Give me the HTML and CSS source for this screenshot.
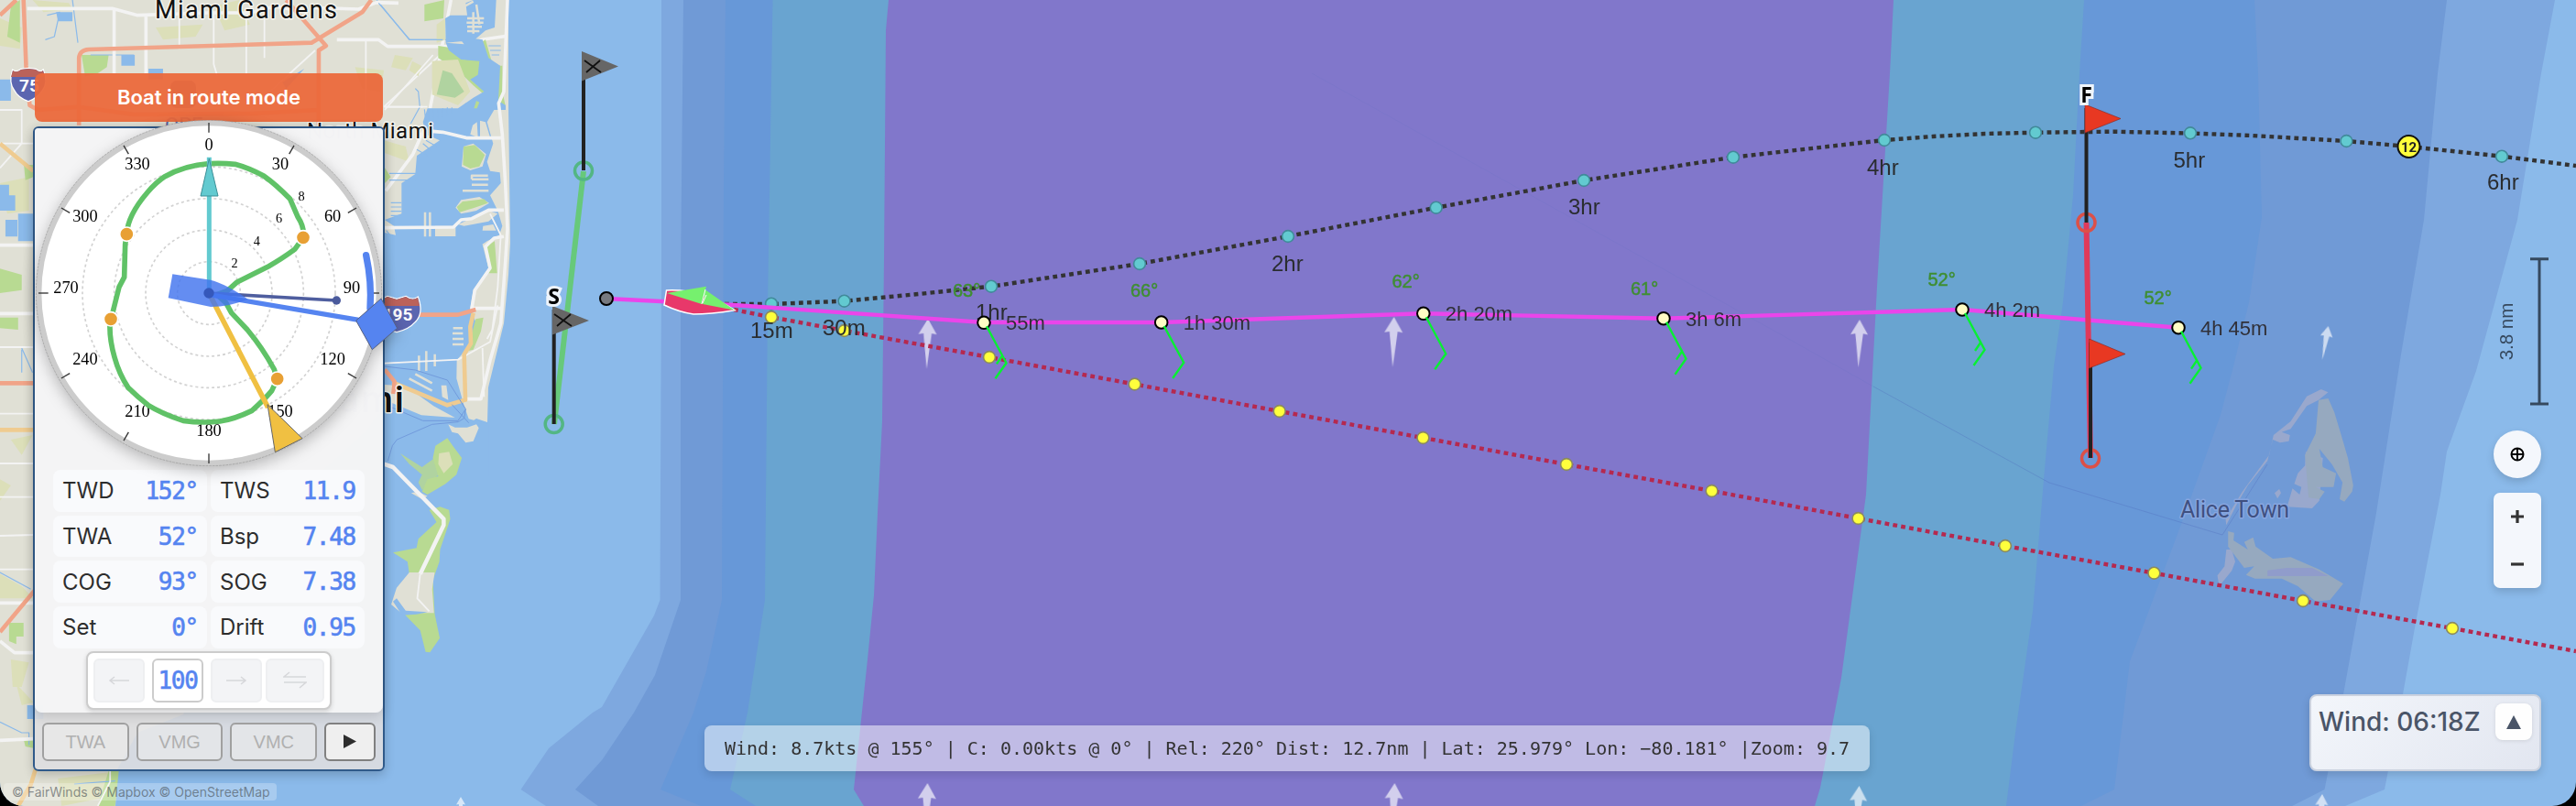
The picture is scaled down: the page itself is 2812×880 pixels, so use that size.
FILE: index.html
```html
<!DOCTYPE html>
<html lang="en">

<head>
    <meta charset="UTF-8">
    <meta name="viewport" content="width=device-width, initial-scale=1.0">
    <title>FairWinds</title>
    <link rel="stylesheet" href="styles.css">
</head>

<body>

    <div class="map">
        <svg class="map-canvas" width="2812" height="880" viewBox="0 0 2812 880">
            <!-- depth bands -->
            <path fill="#7ea8df" d="M722 0V300L720.500 655L714 672L657 772L647 778L599 817L568.500 862L596 880H2560L2603 862L2623 758L2637 680L2664 540L2671 493L2703 405L2748 240L2774 80L2789 0Z" />
            <path fill="#709ad6" d="M746 0L743 300V655L715 737L692 778L657 830L628 862L653 880H2502L2537.500 862L2558 758L2594 560L2621 387L2646 240L2661 80L2671 0Z" />
            <path fill="#6798d8" d="M792 0L790 200L788 655L771 733L757 778L721 862L765 880H2272L2308 862L2325 722L2383 567L2424 453L2438 400L2455 330L2469 237L2465 80L2461 0Z" />
            <path fill="#69a4d0" d="M843.500 0L838 333L835 655L816 778L797 862L825 880H2190L2200 800L2219 667L2231 523L2242 400L2252 330L2263 213L2270 80L2275 0Z" />
            <path fill="#8177cb" d="M970 0L967 33L965 283L963 460L958 560L954 650L947 720L932 862L943 880H1981L1987 860L2010 740L2037 540L2049 313L2054 230L2063 80L2067 0Z" />
            <path class="ferry faint" d="M1432 80L1940 363L2045 422" opacity=".3" />
            <path class="ferry faint" d="M2045 422L2237 527L2426 584L2475 507" />

            <!-- mainland -->
            <path class="land" d="M0 0H555V115L557 265L555 300L550 353L533 423L532 461L520 457L500 470L420 440L400 470L300 560L200 780L150 800L128 840L126 880H0Z" />
            <g transform="scale(.39541 .33333)">
                <path class="veg-light" d="M90 0L190 10L200 30L120 40ZM590 20L660 0L690 80L620 100ZM0 60L60 90L55 160L0 150ZM430 90L560 80L540 120L450 130ZM980 220L1060 230L1050 300L1000 290ZM1090 180L1140 190L1120 230L1080 220ZM1060 460L1120 480L1130 530L1060 500ZM0 600L80 580L80 690L20 700Z" />
                <path class="veg-mid" d="M30 20L55 0L55 140L20 120ZM225 180L300 180L295 220L270 240L235 250ZM0 880L60 900V950L0 960ZM0 1040L50 1040V1080L0 1075ZM66 540H92V580L70 590Z" />
                <path class="canal" d="M1040 0L1130 130H1250M200 0L215 140M250 180H370M130 50L165 40L150 120L125 130M60 1140L90 1220M60 1145V1220" />
                <path class="water" d="M155 40H200V70H160ZM335 180H372V215H335ZM410 225H450V260H410ZM0 260H30V330H0ZM50 700H92V790H50ZM15 720H48V775H15ZM0 605H25V640H42V690H0ZM780 270L840 225L790 290Z" />
                <path class="road-minor" d="M0 470H400M495 40V160M590 40V210L600 250M680 50V240M730 40V190M1010 130V400M1060 350H1180M0 550L60 470V360H0M0 1137H92M870 165L690 360M1215 180L1060 350" />
                <path class="road" d="M75 28H310L380 50L575 42H690L760 20L800 30L850 25M315 30V240M403 48V240M855 25L990 30L1040 8L1100 10M0 803H92M0 1027H92" />
                <path class="road" d="M1245 0L1180 400L1140 505L1065 625M930 130H1045L1070 152H1285L1330 130L1400 118" />
                <path class="motorway" d="M0 50L45 0M65 0L72 215L82 345L105 360L218 350L370 375L700 372L880 360M218 410V190Q220 164 245 162L860 140L1000 40L1025 0M790 0L900 150L880 165V410" />
                <path class="trunk" d="M0 470L92 560" />
                <path class="motorway" d="M0 1255H92" />
            </g>
            <g transform="translate(0 440) scale(.39541 .33333)">
                <path class="veg-light" d="M0 250L30 270L0 320ZM0 560L60 600L92 640L0 640ZM30 120L90 105L60 170ZM45 920L92 980L60 990ZM30 840L80 850L60 930L35 930ZM160 1230L300 1210V1290L170 1320Z" />
                <path class="veg-mid" d="M25 720H65V765H45V790L25 780ZM65 1100H92V1130L70 1125ZM300 1205H328L318 1320H270Z" />
                <path class="water" d="M75 990H120V1035H75Z" />
                <path class="canal" d="M0 555L85 610M0 1045L60 1080H80V1120M205 1248L318 1238" />
                <path class="road-minor" d="M0 35H92M0 198H92M0 308H92M0 435L92 432M0 545H92M304 1200V1240L270 1320" />
                <path class="road" d="M0 655H92M0 780L40 818H92M0 1105L92 1100" />
                <path class="trunk" d="M0 88H92M98 1200L85 1250L50 1320" />
                <path class="motorway" d="M0 750L95 615" />
            </g>

            <!-- Biscayne Bay and the beaches, east of the panel -->
            <g transform="translate(400 0) scale(.33333)">
                <path class="veg-mid" d="M190 15L255 0L252 60L190 70ZM235 150L300 160L360 150L390 130L410 200L400 290L380 305L350 280L300 230L235 190ZM432 215H445V300L455 345H432ZM60 550L80 580L60 600Z" />
                <path class="veg-light" d="M215 200L300 195L340 300L300 345L215 310ZM150 200L180 215L170 250L140 230ZM60 470L130 480L120 520ZM230 80L258 60L260 130L230 140Z" />
                <path class="veg-dark" d="M250 230L280 240L320 300L290 320L230 310Z" />
                <path class="water" d="M258 60L275 50L330 50L325 10L350 0H425L420 90L390 100L355 130L315 135L260 140ZM260 140L320 145L300 120L380 130L400 190L438 215L432 330L456 345V360H418L395 400L415 470L395 530L405 560L437 565L440 600L405 640L430 690L445 740L435 770L395 790L380 800L405 870L350 950L340 1010L360 1060L330 1140L296 1180L295 1240L320 1330L335 1372L400 1390V1560H60V762L96 770L90 740L60 720L115 700V600L160 570L165 510L240 460L195 440L185 400L200 355H300L350 320L385 300L340 260L365 245L370 200L310 195L270 165Z" />
                <path class="canal" d="M40 10L142 130H250M75 568H185M75 590H160M80 664H115M80 678H115M80 692H115M80 706H115M65 755L90 785M145 405L175 350L170 300L160 290M190 358L195 400M205 358V398M220 358V395M235 358V390M250 355V385M265 352V380M280 352V370M190 375H270M190 390H250M165 490L200 510M185 470L215 495M195 460L230 480M400 150H440M405 165H440M410 180H435" />
                <path class="land-line" d="M330 60H385M328 74H383M330 88H378M330 102H370M350 40V110M322 20L350 5M360 15L370 80M315 625H400M345 605H398M345 587H400M345 587V575H398M192 695V775M208 695V775M190 745H210M284 1075H315M282 1092H316M282 1110H318M282 1128H318M172 1165V1215M196 1150V1215M224 1160V1200M140 1240L215 1280M160 1225L215 1255" />
                <path class="land" d="M318 480L350 470L392 505L380 545L340 558L312 545ZM340 440L348 410L362 400L365 450ZM372 395L390 400L405 450H372ZM292 680L310 655L370 645L402 665L360 690L310 700ZM225 740H292V774H225ZM300 735L400 690L430 700L400 725L320 740ZM380 800L420 780L440 790L425 940L395 930L355 950L400 880ZM382 740L415 735L425 755H380ZM345 1010L395 940L425 950L410 1010L370 1040ZM60 1260L130 1265L220 1330L290 1368L180 1360L60 1310ZM245 1262H262L268 1310L248 1300ZM268 1390L290 1400H330L360 1390L368 1402L350 1445L325 1450L300 1420L280 1415Z" />
                <path class="veg-mid" d="M318 480L355 475L388 508L370 545L340 552L316 540ZM296 678L315 660L385 652L398 665L350 682L305 695ZM395 805L420 790L428 895H400ZM358 1045L383 1040L375 1085L350 1145L330 1150ZM360 330L370 335L362 355L352 355Z" />
                <path class="road-minor" d="M60 1190L300 1178L405 1120L430 1000M60 350H185M218 180L60 360M405 700L440 770L430 940L412 1080L395 1110M380 1140L385 1300" />
                <path class="road" d="M462 0L450 300L433 338L445 440L455 600L462 750L455 860L440 1060L405 1180L375 1307H330M215 430L250 433L330 452H440M60 746L285 744L310 720L345 716L400 688H450M450 775L418 780L390 808L405 878L355 950L345 1010H440" />
                <path class="trunk" d="M350 1025L340 1070L342 1125L320 1160L324 1310L265 1327L85 1252" />
                <path class="motorway" d="M150 1031H300L358 1014M60 1210L92 1250L88 1290" />
                <path class="ferry" d="M60 1200L160 1212L265 1245L325 1340L320 1370L300 1382L215 1390L100 1440L85 1460L70 1510M60 1325L185 1378H300L325 1340M280 1325L335 1385" />
            </g>

            <!-- Virginia Key, Key Biscayne -->
            <g transform="translate(0 440) scale(.39541 .33333)">
                <path class="veg-dark" d="M1105 165L1165 210L1200 180L1215 230L1165 285L1155 260L1165 235L1130 200Z" />
                <path class="veg-mid" d="M1195 180L1202 140L1235 115L1250 140L1275 180L1260 235L1230 265L1180 300L1165 290L1180 250L1210 240ZM1215 340L1240 350L1243 380L1215 480L1213 520L1195 580L1200 690L1214 770L1187 817L1175 815L1160 745L1115 690L1130 560L1125 520L1085 490L1150 475L1155 445L1205 390L1185 350Z" />
                <path class="veg-light" d="M1212 165L1240 160L1250 200L1225 230L1210 200Z" />
                <path class="land" d="M1130 555H1200L1193 610L1198 688H1150L1110 690L1080 660L1095 605ZM1135 295L1155 290L1180 305L1165 315Z" />
                <path class="water" d="M1095 640L1120 680L1180 685L1150 692L1110 695L1085 650Z" />
                <path class="road key-road" d="M1060 200L1085 210L1225 380V400L1160 560" />
                <path class="road-minor" d="M1160 560L1152 640L1185 682" />
            </g>

            <!-- Bimini -->
            <g transform="translate(2200 400) scale(.39032 .33333)">
                <path fill="#99a8cd" d="M815 98L855 75L875 85L848 110L815 130L770 205L745 215L768 225L765 245L740 250L720 240L705 310L650 390L620 450L590 520L588 500L635 410L710 290L722 225L770 180ZM790 350L810 325L812 280L860 300L850 440L830 465L760 460L775 400L795 420L800 395L780 385ZM725 415L738 402L743 415L733 433ZM590 600L605 600L615 640L605 670L570 720L565 685L585 655Z" />
                <path fill="#96a9bf" d="M848 110L875 105L892 150L910 220L930 300L945 390L942 410L920 443L907 435L915 380L885 320L850 270L860 330L897 350L890 395H840L865 410L850 435L820 430L810 290L840 220ZM595 540L612 545L610 570L650 600L640 575L665 560L672 590L720 630L770 625L850 665L917 712L880 765L840 770L790 720L745 695L670 695L645 683L668 655L640 660L595 590Z" />
                <path fill="#909ccb" d="M705 668L760 660H830L875 687H705Z" />
            </g>

            <g class="place">
                <text x="169" y="20" font-size="27" textLength="199">Miami Gardens</text>
                <text x="335" y="151" font-size="24" textLength="138">North Miami</text>
                <text x="321" y="450" font-size="40" font-weight="500" textLength="120">Miami</text>
                <text class="place-dim" x="2380" y="564.500" font-size="25" textLength="119">Alice Town</text>
            </g>

            <g class="shield">
                <path fill="#5b65b0" d="M14 77Q18 80 23 76L31 75L39 76Q44 80 47 77Q52 90 46 98Q41 106 31 110Q20 106 16 98Q10 90 14 77Z" />
                <path class="shield-top" fill="#bb625a" d="M14 77Q18 80 23 76L31 75L39 76Q44 80 47 77L49 84H12Z" />
                <text x="32" y="100" font-size="19">75</text>
                <path fill="#5b65b0" d="M411 326Q417 328 423 324L433 327L443 324Q450 329 456 325Q462 342 453 351Q446 359 433 362Q420 359 414 351Q404 342 411 326Z" />
                <path class="shield-top" fill="#bb625a" d="M411 326Q417 328 423 324L433 327L443 324Q450 329 456 325L458 334H409Z" />
                <text x="434" y="350" font-size="19">195</text>
            </g>
            <g>
                <rect x="186" y="88" width="28" height="30" rx="7" fill="#6b6f8c" opacity=".8" />
                <text class="place-code" x="180" y="144">OPF</text>
            </g>

            <g id="windArrows" class="wind-arrows"></g>

            <!-- start line -->
            <path class="start-line" d="M637 187L605 463" />
            <circle class="start-mark" cx="637" cy="186.500" r="9.500" />
            <circle class="start-mark" cx="604.700" cy="463" r="9.500" />
            <path class="pole" d="M637 60V186M604.700 338V463" />
            <path fill="#666" d="M635 56L675 72.500L635 88.500ZM603 334L643 350L603 365.500Z" />
            <path class="flag-cross" d="M638 66L656 79M655 66L640 79M605 343L624 356M623 343L608 356" />
            <text class="line-label" x="604.700" y="332">S</text>

            <!-- courses -->
            <path class="fixed-course" d="M801 338L842 346.300L921.600 361L1080 390L1238.600 419.500L1396.700 449L1553.400 478L1710 507L1868.600 536L2028.500 566L2189 596L2351.400 625.700L2514 656L2677 686L2812 711" />
            <path class="twa-course" d="M782 332H842L921.600 328.700L1003 321L1082 312.700L1244 288L1406 258L1567.700 226.700L1729 197L1892 171.700L2057 153L2110 149L2167 146L2222 144.700L2307 143.700L2391 145.500L2458 148L2561.400 154L2629.500 160L2731 170.700L2812 181" />
            <g id="fixedDots"></g>
            <g id="twaDots"></g>
            <path class="route" d="M662 326L801 333L1074 352L1267.700 352L1553.800 342.300L1816 347.700L2142 338L2378 357.700" />
            <circle class="route-start" cx="662" cy="326" r="7" />
            <g id="hours" class="hours"></g>

            <!-- finish line -->
            <path class="finish-line" d="M2277.500 243L2282 500" />
            <circle class="finish-mark" cx="2277.500" cy="243" r="9.500" />
            <circle class="finish-mark" cx="2282" cy="500.500" r="9.500" />
            <path class="pole" d="M2277.500 118V243M2282 374V500" />
            <path class="finish-flag" d="M2276 114L2315 129.500L2276 145ZM2280.500 370L2320 386.500L2280.500 402Z" />
            <text class="line-label" x="2277.500" y="112">F</text>

            <g id="waypoints"></g>

            <circle cx="2629.500" cy="160" r="12" fill="#ffff3c" stroke="#111" stroke-width="2" />
            <text class="gate" x="2629.500" y="165.500">12</text>

            <!-- boat -->
            <path fill="#e8386a" stroke="#fff" stroke-width="1.500" d="M727.500 317L725 333Q742 341 757 343Q775 343 802 338.700Q765 315 727.500 317Z" />
            <path fill="#76f06e" d="M728 320L771 312.700L766 332ZM770 316.500L802 338.700L767 332Z" />
            <path fill="none" stroke="#fff" stroke-width="1" d="M770 316L768 324L766 332M771 322L767 331" />

            <!-- scale bar -->
            <path class="scale-bar" d="M2762 282.700H2782M2762 441H2782M2772 282.700V441" />
            <text class="scale-text" transform="translate(2743 362) rotate(-90)">3.8 nm</text>
        </svg>

        <div class="instruments">
            <div class="mode-banner">Boat in route mode</div>

            <div class="panel">
                <div class="panel-main">
                    <svg class="gauge" width="410" height="400" viewBox="0 0 1230 1200">
                        <circle class="gauge-face" cx="594" cy="600" r="557" />
                        <circle class="gauge-edge" cx="594" cy="600" r="566" />
                        <g class="rings">
                            <circle cx="594" cy="600" r="103" />
                            <circle cx="594" cy="600" r="207" />
                            <circle cx="594" cy="600" r="310" />
                            <circle cx="594" cy="600" r="414" />
                        </g>
                        <g id="ticks"></g>
                        <g class="speeds">
                            <text x="678" y="515">2</text>
                            <text x="751" y="444">4</text>
                            <text x="824" y="369">6</text>
                            <text x="897" y="297">8</text>
                        </g>
                        <path class="polar" d="M325 406C327 370 350 320 393 270Q420 238 450 218Q515 182 595 176Q640 174 680 178Q725 190 775 217Q815 245 860 292L885 350Q908 385 903 418L875 457Q830 490 790 512L685 565L655 592L620 605L650 632L668 665L720 720Q770 780 808 850L818 881L800 920Q775 950 735 985Q680 1012 630 1020Q570 1027 510 1018Q440 995 395 967Q360 940 330 910Q300 865 285 810Q268 750 270 700L285 640L300 580L317 548L320 440Z" />
                        <g class="polar-dots">
                            <circle cx="325" cy="407" r="23" />
                            <circle cx="903" cy="418" r="23" />
                            <circle cx="273" cy="685" r="23" />
                            <circle cx="818" cy="881" r="23" />
                        </g>
                        <path stroke="#62cad0" stroke-width="15" d="M595 155V600" />
                        <path fill="#62cad0" stroke="#3c8f96" stroke-width="3" d="M595 160L567 282H624Z" />
                        <path stroke="#f0c042" stroke-width="17" d="M594 600L788 975" />
                        <path fill="#f0c042" stroke="#666" stroke-width="3" d="M786 965L900 1076L811 1121Z" />
                        <path stroke="#4f5e9f" stroke-width="11" d="M594 600L1012 624" />
                        <circle fill="#4a5a9c" cx="1012" cy="624" r="14" />
                        <path stroke="#5584f0" stroke-width="16" d="M594 605L1085 688" />
                        <path stroke="#5584f0" stroke-width="22" stroke-linecap="round" fill="none" d="M1109 476Q1128 565 1122 650" />
                        <path fill="#5584f0" stroke="#555f80" stroke-width="3" d="M1158 618L1211 715L1129 785L1076 690Z" />
                        <path fill="#4274ee" fill-opacity=".82" d="M475 538L600 557Q650 570 722 620Q660 645 600 645L461 616Z" />
                        <circle fill="#3558bb" cx="594" cy="600" r="17" />
                    </svg>

                    <div class="readings">
                        <div class="reading"><span>TWD</span><b>152°</b></div>
                        <div class="reading"><span>TWS</span><b>11.9</b></div>
                        <div class="reading"><span>TWA</span><b>52°</b></div>
                        <div class="reading"><span>Bsp</span><b>7.48</b></div>
                        <div class="reading"><span>COG</span><b>93°</b></div>
                        <div class="reading"><span>SOG</span><b>7.38</b></div>
                        <div class="reading"><span>Set</span><b>0°</b></div>
                        <div class="reading"><span>Drift</span><b>0.95</b></div>
                    </div>

                    <div class="steering">
                        <button disabled>
                            <svg width="24" height="16" viewBox="0 0 24 16"><path d="M23 8H2M7 4L2 8L7 12" /></svg>
                        </button>
                        <div class="heading">100</div>
                        <button disabled>
                            <svg width="24" height="16" viewBox="0 0 24 16"><path d="M1 8H22M17 4L22 8L17 12" /></svg>
                        </button>
                        <button class="tack" disabled>
                            <svg width="26" height="20" viewBox="0 0 26 20"><path d="M25 6H1L7 1M1 12H25L18 18" /></svg>
                        </button>
                    </div>
                </div>

                <div class="modes">
                    <button disabled>TWA</button>
                    <button disabled>VMG</button>
                    <button disabled>VMC</button>
                    <button class="play">
                        <svg width="14" height="16" viewBox="0 0 14 16"><path fill="#2d2d2d" d="M0 0L14 7.500L0 15Z" /></svg>
                    </button>
                </div>
            </div>
        </div>

        <div class="attribution">© FairWinds © Mapbox © OpenStreetMap</div>

        <div class="status">Wind: 8.7kts @ 155° | C: 0.00kts @ 0° | Rel: 220° Dist: 12.7nm | Lat: 25.979° Lon: −80.181° |Zoom: 9.7</div>

        <div class="controls">
            <button class="locate">
                <svg width="16" height="16" viewBox="0 0 16 16"><circle cx="8" cy="8" r="6.500" /><path d="M8 2V14M2 8H14" /></svg>
            </button>
            <div class="zoom">
                <button><svg width="14" height="14" viewBox="0 0 14 14"><path d="M7 0V14M0 7H14" /></svg></button>
                <button><svg width="14" height="14" viewBox="0 0 14 14"><path d="M0 7H14" /></svg></button>
            </div>
        </div>

        <div class="wind-card">
            <span>Wind: 06:18Z</span>
            <button>
                <svg width="16" height="15" viewBox="0 0 16 15"><path fill="#4a5568" d="M8 0L16 15H0Z" /></svg>
            </button>
        </div>
    </div>

    <script src="script.js"></script>

</body>

</html>
```

FILE: styles.css
```css
body {
    margin: 0;
    background: #000;
    font-family: Inter, sans-serif;
}

button {
    margin: 0;
    padding: 0;
    border: none;
    box-sizing: border-box;
    font-family: inherit;
    display: flex;
    align-items: center;
    justify-content: center;
}

.map {
    position: relative;
    width: 2812px;
    height: 880px;
    overflow: hidden;
    background: #8bbaea;
    border-radius: 0 0 26px 26px;
}

.map-canvas {
    display: block;
}

/* base map */
.land {
    fill: #e0e0d5;
}

.water {
    fill: #8bbaea;
}

.veg-light {
    fill: #dcdfb9;
}

.veg-mid {
    fill: #b8da92;
}

.veg-dark {
    fill: #b0d3a0;
}

.canal,
.land-line,
.road,
.road-minor,
.motorway,
.trunk,
.ferry {
    fill: none;
    stroke-linejoin: round;
    vector-effect: non-scaling-stroke;
}

.canal {
    stroke: #8bbaea;
    stroke-width: 1.2px;
}

.land-line {
    stroke: #e0e0d5;
    stroke-width: 2.5px;
}

.road {
    stroke: #f3f3f3;
    stroke-width: 3.6px;
}

.key-road {
    stroke-width: 4.5px;
}

.road-minor {
    stroke: #f3f3f3;
    stroke-width: 1.8px;
}

.motorway {
    stroke: #f1a488;
    stroke-width: 4.6px;
}

.trunk {
    stroke: #efcb90;
    stroke-width: 4.6px;
}

.ferry {
    stroke: #729bdc;
    stroke-width: 1px;
}

.faint {
    stroke: rgba(80, 110, 190, .35);
}

.place {
    font-family: Roboto, sans-serif;
    fill: #111;
    stroke: #f4f4ee;
    stroke-width: 3px;
    stroke-linejoin: round;
    paint-order: stroke;
}

.place-dim {
    fill: #3f5080;
    stroke: #87a6e0;
}

.place-code {
    font: 22px Roboto, sans-serif;
    fill: #5c62a0;
}

.shield path {
    stroke: #fff;
    stroke-width: 2.5px;
    paint-order: stroke;
}

.shield .shield-top {
    stroke: none;
}

.shield text {
    font-family: Roboto, sans-serif;
    font-weight: 700;
    fill: #fff;
    text-anchor: middle;
}

/* routes */
.wind-arrows {
    fill: #fff;
    opacity: .65;
}

.start-line {
    stroke: #67c97b;
    stroke-width: 6px;
}

.start-mark {
    fill: none;
    stroke: #53b684;
    stroke-width: 3.5px;
}

.pole {
    stroke: #222;
    stroke-width: 4px;
}

.flag-cross {
    stroke: #111;
    stroke-width: 1.8px;
}

.line-label {
    font: 700 23px "Open Sans", sans-serif;
    text-anchor: middle;
    stroke: #eef4fb;
    stroke-width: 6px;
    paint-order: stroke;
}

.twa-course,
.fixed-course {
    fill: none;
    stroke: #333;
    stroke-width: 4.4px;
    stroke-dasharray: 4.8 4.2;
}

.fixed-course {
    stroke: #b5294f;
}

.route {
    fill: none;
    stroke: #ea45ea;
    stroke-width: 4.4px;
}

.route-start {
    fill: #777a80;
    stroke: #000;
    stroke-width: 2px;
}

.twa-dot {
    fill: #62cad0;
    stroke: #418a9a;
    stroke-width: 1.6px;
}

.fixed-dot {
    fill: #ffff3c;
    stroke: #8a8a60;
    stroke-width: 1.6px;
}

.hours {
    font: 24px "Liberation Sans", sans-serif;
    fill: #2a2d30;
}

.waypoint {
    fill: #fffcc4;
    stroke: #000;
    stroke-width: 2px;
}

.eta {
    font: 22px "Liberation Sans", sans-serif;
    fill: #303038;
}

.angle {
    font: 20px "Liberation Sans", sans-serif;
    fill: #3f8e32;
    stroke: #3f8e32;
    stroke-width: .5px;
}

.barb {
    fill: none;
    stroke: #08f032;
    stroke-width: 2.4px;
}

.finish-line {
    stroke: #e0395a;
    stroke-width: 6px;
}

.finish-mark {
    fill: none;
    stroke: #dc5048;
    stroke-width: 3.5px;
}

.finish-flag {
    fill: #e83822;
    stroke: #8c2c28;
    stroke-width: .7px;
}

.gate {
    font: 700 15px Roboto, sans-serif;
    text-anchor: middle;
    fill: #222;
}

.scale-bar {
    stroke: #36495e;
    stroke-width: 3px;
    fill: none;
}

.scale-text {
    font: 20.5px "Liberation Sans", sans-serif;
    text-anchor: middle;
    fill: #36495e;
}

/* instruments */
.instruments {
    position: absolute;
    left: 36px;
    top: 80px;
    width: 384px;
    display: flex;
    flex-direction: column;
    gap: 5px;
}

.mode-banner {
    box-sizing: border-box;
    height: 53px;
    margin: 0 2px;
    padding-bottom: 2px;
    display: flex;
    align-items: center;
    justify-content: center;
    border-radius: 8px;
    background: rgba(235, 104, 58, .94);
    color: #fff;
    font-size: 22px;
    font-weight: 600;
}

.panel {
    box-sizing: border-box;
    height: 704px;
    border: 2px solid #305a8a;
    border-radius: 6px;
    background: rgba(222, 222, 224, .9);
    box-shadow: 0 4px 12px rgba(0, 0, 0, .2);
    display: flex;
    flex-direction: column;
}

.panel-main {
    height: 638px;
    border-radius: 4px 4px 8px 8px;
    background: rgba(245, 245, 246, .93);
    box-shadow: 0 3px 14px rgba(0, 0, 0, .15);
    display: flex;
    flex-direction: column;
    align-items: center;
}

.gauge {
    flex: none;
    align-self: flex-start;
    margin: -20px 0 -7px -8px;
    overflow: visible;
    filter: drop-shadow(0 5px 8px rgba(0, 0, 0, .25));
}

.gauge-face {
    fill: #fff;
    stroke: #ccc;
    stroke-width: 18px;
}

.gauge-edge {
    fill: none;
    stroke: #999;
    stroke-width: 2px;
    stroke-dasharray: 8 3;
}

.rings circle {
    fill: none;
    stroke: #d2d2d2;
    stroke-width: 5px;
    stroke-dasharray: 9 9;
}

.tick {
    stroke: #333;
    stroke-width: 4px;
}

.degree {
    font: 55px "Liberation Serif", serif;
    text-anchor: middle;
}

.speeds {
    font: 43px "Liberation Serif", serif;
    text-anchor: middle;
}

.polar {
    fill: none;
    stroke: #60c267;
    stroke-width: 17px;
    stroke-linejoin: round;
}

.polar-dots circle {
    fill: #e8a034;
    stroke: #fff;
    stroke-width: 5px;
}

.readings {
    width: 340px;
    display: grid;
    grid-template-columns: 1fr 1fr;
    grid-auto-rows: 45.7px;
    gap: 4px;
}

.reading {
    display: flex;
    align-items: center;
    justify-content: space-between;
    padding: 0 10px;
    border-radius: 8px;
    background: rgba(249, 250, 253, .85);
    font-size: 24px;
    color: #2d2d2d;
}

.reading b,
.heading {
    font: 500 26px "DejaVu Sans Mono", monospace;
    letter-spacing: -1.25px;
    color: #5584f0;
    -webkit-text-stroke: .6px #5584f0;
}

.steering {
    box-sizing: border-box;
    width: 268px;
    height: 64px;
    margin-top: 3px;
    padding: 6px;
    display: flex;
    gap: 8px;
    border: 2px solid #ccc;
    border-radius: 8px;
    background: #fff;
    box-shadow: 0 2px 5px rgba(0, 0, 0, .15);
}

.steering button,
.heading {
    box-sizing: border-box;
    width: 56px;
    height: 48px;
    border: 2px solid #eeeff1;
    border-radius: 6px;
    background: #f3f4f6;
}

.steering svg {
    fill: none;
    stroke: #d6d7da;
    stroke-width: 1.5px;
}

.steering .tack {
    width: 64px;
    margin-left: -4px;
}

.heading {
    display: flex;
    align-items: center;
    justify-content: center;
    border-color: #ccc;
    background: #fff;
}

.modes {
    display: flex;
    gap: 8px;
    padding: 11px 8px 0;
}

.modes button {
    width: 95px;
    height: 42px;
    border: 2px solid #a0a0a0;
    border-radius: 6px;
    background: rgba(239, 239, 239, .5);
    color: #b0b0b0;
    font: 20px "Liberation Sans", sans-serif;
}

.modes .play {
    width: 56px;
    border-color: #808080;
    background: #efefef;
}

.attribution {
    position: absolute;
    left: 4px;
    bottom: 6px;
    box-sizing: border-box;
    width: 298px;
    height: 19px;
    padding-left: 9px;
    border-radius: 4px;
    background: rgba(255, 255, 255, .25);
    color: rgba(70, 75, 80, .6);
    font-size: 14px;
    line-height: 20px;
    white-space: nowrap;
}

.status {
    position: absolute;
    left: 769px;
    bottom: 38px;
    box-sizing: border-box;
    width: 1272px;
    height: 50px;
    border-radius: 8px;
    background: rgba(255, 255, 255, .5);
    box-shadow: 0 4px 10px rgba(0, 0, 0, .12);
    color: #333;
    font: 20px/50px "DejaVu Sans Mono", monospace;
    text-align: center;
    white-space: nowrap;
}

.controls {
    position: absolute;
    right: 38px;
    top: 470px;
    width: 52px;
    display: flex;
    flex-direction: column;
    gap: 16px;
}

.locate,
.zoom {
    background: #f4f7fc;
    box-shadow: 0 4px 8px rgba(0, 0, 0, .15);
}

.locate {
    height: 52px;
    border-radius: 50%;
}

.locate svg {
    fill: none;
    stroke: #000;
    stroke-width: 2px;
}

.zoom {
    border-radius: 7px;
}

.zoom button {
    width: 52px;
    height: 52px;
    background: none;
}

.zoom svg {
    stroke: #333;
    stroke-width: 3.2px;
}

.wind-card {
    position: absolute;
    right: 38px;
    bottom: 38px;
    box-sizing: border-box;
    width: 253px;
    height: 84px;
    padding: 8px 8px 0;
    display: flex;
    align-items: flex-start;
    justify-content: space-between;
    border: 2px solid #cbd2df;
    border-radius: 8px;
    background: linear-gradient(135deg, #f3f6fb, #e2e6f0);
    box-shadow: 0 4px 10px rgba(0, 0, 0, .15);
    color: #4a5568;
    font-size: 28px;
    font-weight: 500;
    line-height: 40px;
    white-space: nowrap;
}

.wind-card button {
    width: 40px;
    height: 40px;
    border-radius: 8px;
    background: #fefefe;
    box-shadow: 0 1px 4px rgba(0, 0, 0, .1);
}
```

FILE: script.js
```js
const SVG_NS = 'http://www.w3.org/2000/svg';

function add(parent, tag, attrs, text) {
    const el = document.createElementNS(SVG_NS, tag);
    for (const name in attrs) {
        el.setAttribute(name, attrs[name]);
    }
    if (text) {
        el.textContent = text;
    }
    parent.appendChild(el);
}

// Gauge ticks and degree labels
const ticks = document.getElementById('ticks');
for (let deg = 0; deg < 360; deg += 30) {
    const s = Math.sin(deg * Math.PI / 180);
    const c = -Math.cos(deg * Math.PI / 180);
    add(ticks, 'line', {
        class: 'tick',
        x1: 594 + s * 526, y1: 600 + c * 526,
        x2: 594 + s * 558, y2: 600 + c * 558
    });
    add(ticks, 'text', { class: 'degree', x: 594 + s * 468, y: 600 + c * 468 }, String(deg));
}

// Dots along the constant angle and fixed heading courses
const twaDots = [[842, 331.7], [921.6, 328.7], [1082, 312.7], [1244, 288], [1406, 258], [1567.7, 226.7],
    [1729, 197], [1892, 171.7], [2057, 153], [2222, 144.7], [2391, 145.3], [2561.4, 154], [2731, 170.7]];
const fixedDots = [[842, 346.3], [921.6, 361], [1080, 390], [1238.6, 419.5], [1396.7, 449], [1553.4, 478],
    [1710, 507], [1868.6, 536], [2028.5, 566], [2189, 596], [2351.4, 625.7], [2514, 656], [2677, 686]];
twaDots.forEach(function (p) {
    add(document.getElementById('twaDots'), 'circle', { class: 'twa-dot', cx: p[0], cy: p[1], r: 6.4 });
});
fixedDots.forEach(function (p) {
    add(document.getElementById('fixedDots'), 'circle', { class: 'fixed-dot', cx: p[0], cy: p[1], r: 6.4 });
});

const hours = [['15m', 819, 369], ['30m', 898, 366], ['1hr', 1065, 349], ['2hr', 1388, 295.5], ['3hr', 1712, 233.5],
    ['4hr', 2038, 191], ['5hr', 2372.5, 183], ['6hr', 2715, 207]];
hours.forEach(function (h) {
    add(document.getElementById('hours'), 'text', { x: h[1], y: h[2] }, h[0]);
});

// Route waypoints: x, y, eta, angle, angle x, angle y, half barb
const waypoints = [
    [1074, 352.3, '55m', '63°', 1040, 323.5, true],
    [1267.7, 352, '1h 30m', '66°', 1234, 323.5, false],
    [1553.8, 342.3, '2h 20m', '62°', 1519.5, 314, false],
    [1816, 347.7, '3h 6m', '61°', 1780, 321.7, true],
    [2142, 338, '4h 2m', '52°', 2104.5, 311.7, true],
    [2378, 357.7, '4h 45m', '52°', 2340.5, 331.7, true]
];
const layer = document.getElementById('waypoints');
waypoints.forEach(function (w) {
    const x = w[0], y = w[1];
    add(layer, 'circle', { class: 'waypoint', cx: x, cy: y, r: 6.8 });
    add(layer, 'text', { class: 'eta', x: x + 24, y: y + 8 }, w[2]);
    add(layer, 'text', { class: 'angle', x: w[4], y: w[5] }, w[3]);
    let d = `M${x + 3} ${y + 4}L${x + 24.5} ${y + 44}L${x + 12.5} ${y + 61}`;
    if (w[6]) {
        d += `M${x + 20} ${y + 36}L${x + 14} ${y + 45}`;
    }
    add(layer, 'path', { class: 'barb', d: d });
});

// Wind direction arrows: x, y, scale, rotation
const arrows = [[1013, 348, 1, 1.5], [1521.7, 346, 1, 1.5], [2030, 349, .95, 1.5], [2541.6, 356, .68, 10],
    [503, 870, .5, 0], [1012.5, 855, 1, 2], [1522.5, 855, 1, 3], [2029.5, 858, .95, 3], [2535, 867, .7, 3]];
arrows.forEach(function (a) {
    add(document.getElementById('windArrows'), 'path', {
        transform: `translate(${a[0]} ${a[1]}) rotate(${a[3]}) scale(${a[2]})`,
        d: 'M0 0L10 17L4.500 16L0 55L-4.500 16L-10 17Z'
    });
});
```
